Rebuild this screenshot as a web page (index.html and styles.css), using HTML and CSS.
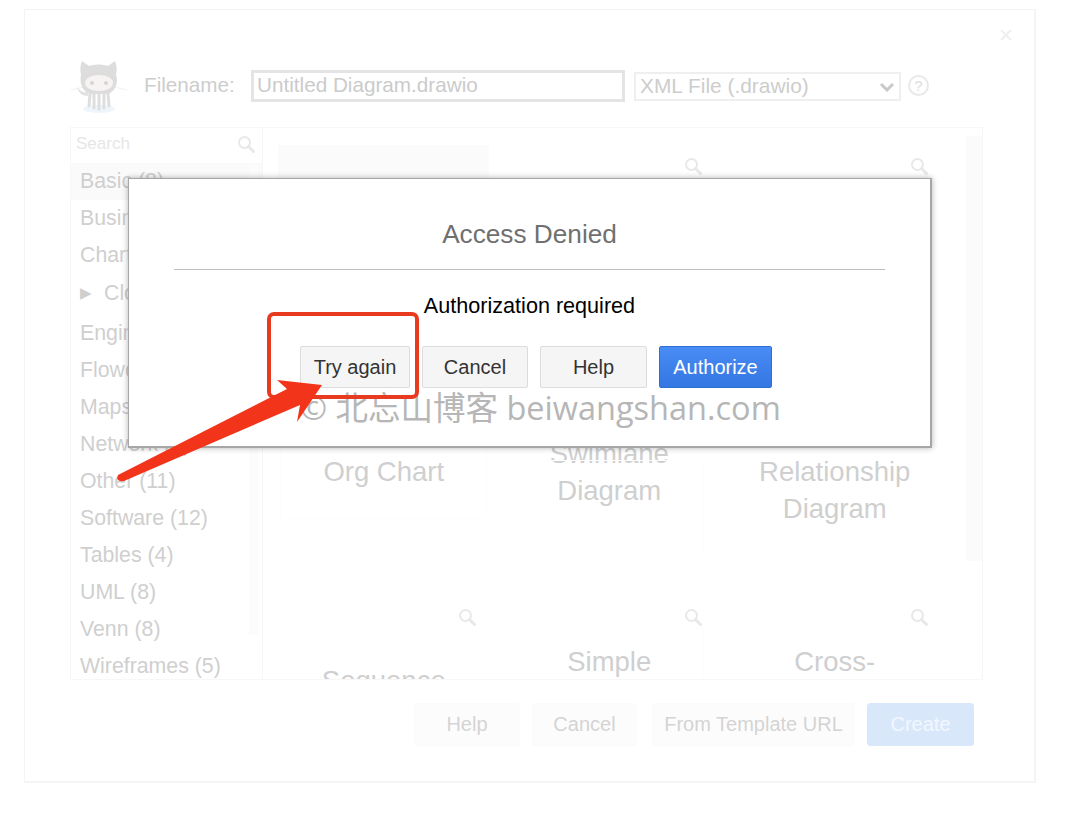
FILE: index.html
```html
<!DOCTYPE html>
<html lang="en">
<head>
    <meta charset="UTF-8">
    <meta name="viewport" content="width=device-width, initial-scale=1.0">
    <title>Access Denied</title>
    <link rel="stylesheet" href="styles.css">
</head>
<body>
    <svg class="defs" width="0" height="0">
        <symbol id="mag" viewBox="0 0 18 18">
            <circle cx="7.5" cy="7.5" r="5.5" fill="none" stroke="currentColor" stroke-width="2"/>
            <path d="M11.5 11.5 L16.5 16.5" stroke="currentColor" stroke-width="3" stroke-linecap="round"/>
        </symbol>
    </svg>

    <div class="window">
        <span class="close">&#10005;</span>

        <div class="file-row">
            <svg class="logo" width="60" height="56" viewBox="0 0 60 56">
                <ellipse cx="29" cy="51" rx="16" ry="4" fill="#eef6fc"/>
                <path d="M1 32 L14 29 M44 29 L57 32" stroke="#f1f1f1" stroke-width="1"/>
                <path d="M7 29 C9 36 13 38 18 38 L18 34 C13 35 10 33 7 29 Z" fill="#e2e2e2"/>
                <path d="M12 3 L19 8 C25 6 32 6 38 8 L45 3 C47 8 47 13 46 17 C49 24 45 35 37 36 L21 36 C13 35 9 25 11 17 C10 12 10 8 12 3 Z" fill="#dddddd"/>
                <ellipse cx="29" cy="25" rx="14" ry="8" fill="#f6f3f2"/>
                <circle cx="22" cy="25" r="2" fill="#d6d6d6"/>
                <circle cx="36" cy="25" r="2" fill="#d6d6d6"/>
                <path d="M20 36 L19 48 M24 36 L24 50 M29 36 L29 51 M34 36 L34 50 M38 36 L39 48" stroke="#dedede" stroke-width="3" stroke-linecap="round"/>
            </svg>
            <label class="file-label" for="filename">Filename:</label>
            <input class="file-input" id="filename" type="text" value="Untitled Diagram.drawio">
            <div class="type-wrap">
                <select class="file-type">
                    <option>XML File (.drawio)</option>
                </select>
                <svg class="chevron" width="16" height="10" viewBox="0 0 16 10">
                    <path d="M2 2 L8 8 L14 2" fill="none" stroke="#c9c9c9" stroke-width="3"/>
                </svg>
            </div>
            <span class="help-icon">?</span>
        </div>

        <div class="panel">
            <div class="sidebar">
                <div class="search">
                    <span>Search</span>
                    <svg class="mag" width="18" height="18"><use href="#mag"/></svg>
                </div>
                <ul class="categories">
                    <li class="active">Basic (8)</li>
                    <li>Business (12)</li>
                    <li>Charts (6)</li>
                    <li class="tree"><span class="caret">&#9654;</span>Cloud (10)</li>
                    <li>Engineering (5)</li>
                    <li>Flowcharts (9)</li>
                    <li>Maps (3)</li>
                    <li>Network (9)</li>
                    <li>Other (11)</li>
                    <li>Software (12)</li>
                    <li>Tables (4)</li>
                    <li>UML (8)</li>
                    <li>Venn (8)</li>
                    <li>Wireframes (5)</li>
                </ul>
                <div class="side-scroll"></div>
            </div>

            <div class="templates">
                <div class="grid">
                    <div class="card">
                        <div class="thumb thumb-blank"></div>
                        <div class="card-name">Org Chart</div>
                        <div class="ghost ghost-org"></div>
                    </div>
                    <div class="card">
                        <svg class="mag card-mag" width="18" height="18"><use href="#mag"/></svg>
                        <div class="thumb thumb-short"></div>
                        <div class="card-name">Swimlane<br>Diagram</div>
                        <div class="ghost ghost-swim"></div>
                    </div>
                    <div class="card">
                        <svg class="mag card-mag" width="18" height="18"><use href="#mag"/></svg>
                        <div class="thumb"></div>
                        <div class="card-name">Relationship<br>Diagram</div>
                    </div>
                    <div class="card">
                        <svg class="mag card-mag card-mag-first" width="18" height="18"><use href="#mag"/></svg>
                        <div class="thumb thumb-seq"></div>
                        <div class="card-name">Sequence</div>
                    </div>
                    <div class="card">
                        <svg class="mag card-mag" width="18" height="18"><use href="#mag"/></svg>
                        <div class="thumb thumb-low"></div>
                        <div class="card-name">Simple</div>
                        <div class="ghost ghost-simple"></div>
                    </div>
                    <div class="card">
                        <svg class="mag card-mag" width="18" height="18"><use href="#mag"/></svg>
                        <div class="thumb thumb-low"></div>
                        <div class="card-name">Cross-</div>
                    </div>
                </div>
                <div class="main-scroll"></div>
            </div>
        </div>

        <div class="footer">
            <button class="btn-faint btn-help">Help</button>
            <button class="btn-faint btn-cancel">Cancel</button>
            <button class="btn-faint btn-url">From Template URL</button>
            <button class="btn-create">Create</button>
        </div>
    </div>

    <div class="dialog">
        <h2 class="dialog-title">Access Denied</h2>
        <p class="dialog-msg">Authorization required</p>
        <div class="dialog-btns">
            <button class="btn btn-try">Try again</button>
            <button class="btn btn-no">Cancel</button>
            <button class="btn btn-help-d">Help</button>
            <button class="btn btn-auth">Authorize</button>
        </div>
    </div>

    <div class="watermark">&copy; 北忘山博客 beiwangshan.com</div>
    <div class="red-box"></div>
    <svg class="arrow" width="1080" height="814" viewBox="0 0 1080 814">
        <path d="M118 475 L287 389 L277 380 L322 385 L297 422 L300 405 L124 481 Q115 482 118 475 Z" fill="#f2351a"/>
    </svg>
</body>
</html>
```

FILE: styles.css
```css
* {
    box-sizing: border-box;
}

body {
    font-family: "Liberation Sans", Arial, sans-serif;
    margin: 0;
    height: 814px;
    overflow: hidden;
    position: relative;
    background: #fff;
}

.defs {
    position: absolute;
}

/* background window, washed out behind the dialog */
.window {
    position: relative;
    width: 1012px;
    height: 774px;
    margin: 9px 0 0 24px;
    padding: 46px 51px 0 45px;
    border: 2px solid #f4f4f4;
    border-top-width: 1px;
    border-left-width: 1px;
}

.close {
    position: absolute;
    top: 14px;
    right: 20px;
    font-size: 19px;
    color: #efefef;
}

.file-row {
    display: flex;
    align-items: center;
    height: 60px;
}

.logo {
    flex: none;
    margin-right: 14px;
}

.file-label {
    width: 107px;
    margin-top: -2px;
    font-size: 20.7px;
    color: #cdcdcd;
}

.file-input {
    width: 374px;
    height: 32px;
    padding: 0 3px 2px;
    border: 3px solid #e4e4e4;
    font-family: inherit;
    font-size: 20.7px;
    color: #cbcbcb;
    outline: none;
}

.type-wrap {
    position: relative;
    margin-left: 9px;
}

.file-type {
    display: block;
    appearance: none;
    width: 267px;
    height: 29px;
    padding: 0 0 2px 4px;
    border: 2px solid #efefef;
    border-radius: 0;
    background: #fff;
    font-family: inherit;
    font-size: 20.9px;
    color: #cdcdcd;
}

.chevron {
    position: absolute;
    top: 10px;
    right: 6px;
}

.help-icon {
    width: 21px;
    height: 21px;
    margin: -2px 0 0 7px;
    border: 2px solid #e9e9e9;
    border-radius: 50%;
    font-size: 15px;
    line-height: 17px;
    text-align: center;
    color: #dedede;
}

.panel {
    display: flex;
    width: 913px;
    height: 553px;
    margin-top: 11px;
    border: 1px solid #f7f7f7;
    overflow: hidden;
}

.sidebar {
    position: relative;
    flex: none;
    width: 192px;
    border-right: 1px solid #f7f7f7;
}

.search {
    display: flex;
    justify-content: space-between;
    align-items: center;
    height: 35px;
    padding: 0 7px 3px 5px;
    font-size: 17px;
    color: #e6e6e6;
}

.mag {
    color: #e8e8e8;
}

.categories {
    list-style: none;
    margin: 0;
    padding: 0;
    font-size: 21.3px;
    color: #cfcfcf;
}

.categories li {
    height: 37px;
    padding: 0 0 0 9px;
    line-height: 37px;
    white-space: nowrap;
}

.categories .active {
    background: #fafafa;
}

.categories .tree {
    margin-bottom: 4px;
}

.caret {
    margin-right: 12px;
    font-size: 15px;
    vertical-align: 2px;
}

.side-scroll {
    position: absolute;
    top: 37px;
    left: 178px;
    width: 9px;
    height: 470px;
    background: #fcfcfc;
}

.templates {
    position: relative;
    flex: 1;
    padding: 17px 0 0 8px;
}

.grid {
    display: grid;
    grid-template-columns: repeat(3, 225.5px);
    grid-template-rows: 451px 451px;
}

.card {
    position: relative;
    text-align: center;
}

.card-mag {
    position: absolute;
    top: 12px;
    right: 20px;
}

.card-mag-first {
    right: 21px;
}

.thumb {
    height: 308px;
}

.thumb-blank {
    width: 211px;
    height: 308px;
    margin-left: 7px;
    background: linear-gradient(#fbfbfb 0, #fbfbfb 60px, #fff 61px);
}

.thumb-short {
    height: 290px;
}

.thumb-seq {
    height: 66px;
}

.thumb-low {
    height: 47px;
}

.card-name {
    font-size: 27.5px;
    line-height: 37px;
    color: #cfcfcf;
}

/* barely visible outlines of the template previews */
.ghost {
    position: absolute;
    border: 1px solid #fdfdfd;
}

.ghost-org {
    top: 300px;
    left: 9px;
    width: 207px;
    height: 75px;
}

.ghost-swim {
    top: 315px;
    left: 17px;
    width: 190px;
    height: 97px;
}

.ghost-simple {
    top: 32px;
    left: 17px;
    width: 190px;
    height: 60px;
}

.main-scroll {
    position: absolute;
    top: 8px;
    right: 0;
    width: 16px;
    height: 425px;
    background: #fcfbfc;
}

.footer {
    display: flex;
    justify-content: flex-end;
    width: 913px;
    margin-top: 23px;
    padding-right: 9px;
}

.footer button {
    height: 43px;
    border: 1px solid #fbfbfb;
    border-radius: 3px;
    font-family: inherit;
    font-size: 20px;
}

.btn-faint {
    background: #fdfcfd;
    color: #d4d4d4;
}

.btn-help {
    width: 106px;
    margin-right: 12px;
}

.btn-cancel {
    width: 105px;
    margin-right: 15px;
}

.btn-url {
    width: 203px;
    margin-right: 12px;
}

.footer .btn-create {
    width: 107px;
    border-color: #d9e7fb;
    background: #d9e7fb;
    color: #f2f7fe;
}

/* the dialog on top */
.dialog {
    position: absolute;
    top: 178px;
    left: 128px;
    width: 804px;
    height: 270px;
    padding: 40px 45px 0;
    border: 1px solid #a6a6a6;
    border-right-width: 2px;
    border-bottom-width: 2px;
    background: #fff;
    box-shadow: 0 0 6px rgba(0, 0, 0, 0.3);
    text-align: center;
}

.dialog-title {
    margin: 0;
    padding-bottom: 20px;
    border-bottom: 1px solid #bdbdbd;
    font-size: 26.2px;
    font-weight: normal;
    line-height: 30px;
    color: #707070;
}

.dialog-msg {
    margin: 24px 0 28px;
    font-size: 21.6px;
    line-height: 24px;
    color: #000;
}

.dialog-btns {
    display: flex;
    justify-content: center;
    gap: 12px;
    padding-left: 13px;
}

.btn {
    height: 42px;
    border: 1px solid #dcdcdc;
    border-radius: 2px;
    background: #f5f5f5;
    font-family: inherit;
    font-size: 20px;
    color: #333;
}

.btn-try {
    width: 110px;
}

.btn-no {
    width: 106px;
}

.btn-help-d {
    width: 107px;
}

.btn-auth {
    width: 113px;
    border-color: #2f6fd0;
    background: linear-gradient(#4a8cf5, #3476e2);
    color: #fff;
}

.watermark {
    position: absolute;
    top: 386px;
    left: 300px;
    font-family: "Open Sans", "Noto Sans CJK SC", sans-serif;
    font-size: 32.5px;
    line-height: 44px;
    white-space: nowrap;
    color: #b6b6b6;
}

.red-box {
    position: absolute;
    top: 312px;
    left: 267px;
    width: 152px;
    height: 87px;
    border: 4px solid #e83a1e;
    border-radius: 7px;
}

.arrow {
    position: absolute;
    top: 0;
    left: 0;
}
```
